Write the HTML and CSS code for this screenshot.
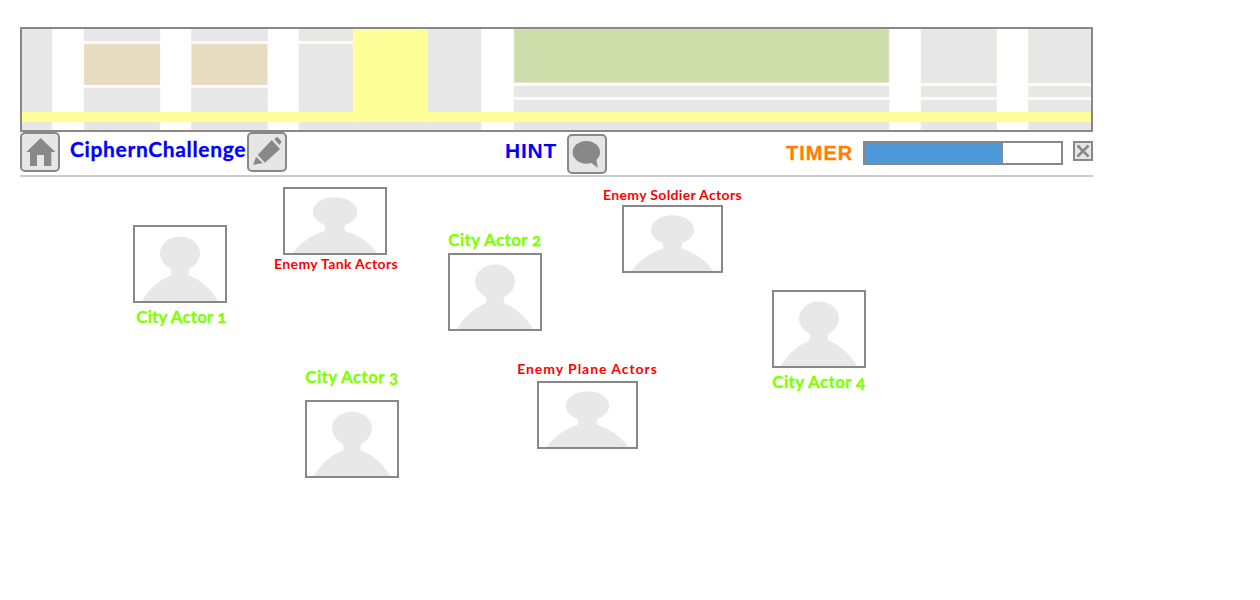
FILE: index.html
```html
<!DOCTYPE html>
<html lang="en">
<head>
<meta charset="utf-8">
<title>CiphernChallenge</title>
<link rel="stylesheet" href="styles.css">
</head>
<body>
<div class="page">
  <svg class="map" viewBox="22 29 1069 101" width="1069" height="101">
    <g class="road-gray">
      <rect x="22" y="29" width="30" height="101"/>
      <rect x="84" y="29" width="76" height="12"/>
      <rect x="84" y="88" width="76" height="42"/>
      <rect x="191.500" y="29" width="76" height="12"/>
      <rect x="191.500" y="88" width="76" height="42"/>
      <rect x="299" y="29" width="54" height="12"/>
      <rect x="299" y="44" width="54" height="86"/>
      <rect x="353" y="112" width="75" height="18"/>
      <rect x="428" y="29" width="53" height="101"/>
      <rect x="514" y="86" width="375" height="11"/>
      <rect x="514" y="100" width="375" height="30"/>
      <rect x="921" y="29" width="75.500" height="54"/>
      <rect x="921" y="86" width="75.500" height="11"/>
      <rect x="921" y="100" width="75.500" height="30"/>
      <rect x="1028.500" y="29" width="63" height="54"/>
      <rect x="1028.500" y="86" width="63" height="11"/>
      <rect x="1028.500" y="100" width="63" height="30"/>
    </g>
    <g class="road-tan">
      <rect x="84" y="44" width="76" height="41"/>
      <rect x="191.500" y="44" width="76" height="41"/>
    </g>
    <rect class="road-green" x="514" y="29" width="375" height="53.500"/>
    <rect class="road-yellow" x="353" y="29" width="75" height="83"/>
    <rect class="road-yellow" x="22" y="112" width="1069" height="10"/>
  </svg>

  <div class="toolbar">
    <button class="icon-btn" type="button" aria-label="Home">
      <svg viewBox="0 0 36 36" width="36" height="36"><path class="glyph" d="M18.700 4 L33.300 18 L29.300 18 L29.300 32 L22 32 L22 21 L15 21 L15 32 L8 32 L8 18 L4.300 18 Z"/></svg>
    </button>
    <span class="title">CiphernChallenge</span>
    <button class="icon-btn" type="button" aria-label="Edit">
      <svg viewBox="0 0 36 36" width="36" height="36"><path class="glyph" d="M4.300 31 L7 22.800 L13.800 29 Z M8.700 21 L22.700 6 L31 15 L16 28.700 Z M25.300 5 L28.300 2.700 L32.700 7.700 L30.300 11 Z"/></svg>
    </button>
    <span class="hint">HINT</span>
    <button class="icon-btn hint-btn" type="button" aria-label="Hint">
      <svg viewBox="0 0 36 36" width="36" height="36"><ellipse class="glyph" cx="17.300" cy="16.300" rx="13.700" ry="11.400"/><path class="glyph" d="M21 26 L28.700 31.700 L27.500 24 Z"/></svg>
    </button>
    <span class="timer">TIMER</span>
    <div class="bar"><div class="bar-fill"></div></div>
    <button class="close-btn" type="button" aria-label="Close">
      <svg viewBox="0 0 16 16" width="16" height="16"><path class="x" d="M2.500 2.500 L13.500 13.500 M13.500 2.500 L2.500 13.500"/></svg>
    </button>
  </div>

  <div class="actor city a1">
    <div class="box"><svg class="person" viewBox="0 0 90 74" preserveAspectRatio="none"><use href="#sil"/></svg></div>
    <span class="label city-label below shift">City Actor 1</span>
  </div>
  <div class="actor enemy a2">
    <div class="box"><svg class="person" viewBox="0 0 90 74" preserveAspectRatio="none"><use href="#sil"/></svg></div>
    <span class="label enemy-label below-tight">Enemy Tank Actors</span>
  </div>
  <div class="actor city a3">
    <span class="label city-label above">City Actor 2</span>
    <div class="box"><svg class="person" viewBox="0 0 90 74" preserveAspectRatio="none"><use href="#sil"/></svg></div>
  </div>
  <div class="actor enemy a4">
    <span class="label enemy-label above-tight">Enemy Soldier Actors</span>
    <div class="box"><svg class="person" viewBox="0 0 90 74" preserveAspectRatio="none"><use href="#sil"/></svg></div>
  </div>
  <div class="actor city a5">
    <div class="box"><svg class="person" viewBox="0 0 90 74" preserveAspectRatio="none"><use href="#sil"/></svg></div>
    <span class="label city-label below">City Actor 4</span>
  </div>
  <div class="actor city a6">
    <span class="label city-label above-far">City Actor 3</span>
    <div class="box"><svg class="person" viewBox="0 0 90 74" preserveAspectRatio="none"><use href="#sil"/></svg></div>
  </div>
  <div class="actor enemy a7">
    <span class="label enemy-label above-plane wide">Enemy Plane Actors</span>
    <div class="box"><svg class="person" viewBox="0 0 90 74" preserveAspectRatio="none"><use href="#sil"/></svg></div>
  </div>

  <svg class="defs" width="0" height="0">
    <defs>
      <g id="sil">
        <ellipse cx="45" cy="26.500" rx="20" ry="17"/>
        <path d="M7 74 C14 62 24 53 35.500 48.500 C37 47.500 36.500 44 35 40 L55 40 C53.500 44 53 47.500 54.500 48.500 C66 53 76 62 83 74 Z"/>
      </g>
    </defs>
  </svg>
</div>
</body>
</html>
```
FILE: styles.css
```css
* { box-sizing: border-box; }
html, body { margin: 0; padding: 0; background: #fff; }
body { font-family: "Lato", "Liberation Sans", sans-serif; }
.page { position: relative; width: 1260px; height: 600px; padding: 27px 0 0 20px; overflow: hidden; }

.map { display: block; width: 1073px; height: 105px; border: 2px solid #888; background: #fff; }
.road-gray rect { fill: #e7e7e7; stroke: #f5e6e2; stroke-width: 0.6; }
.road-tan rect { fill: #e7dcc0; stroke: #f3e8dc; stroke-width: 0.6; }
.road-green { fill: #ccddaa; stroke: #e6e6d0; stroke-width: 0.6; }
.road-yellow { fill: #ffff99; }

.toolbar { display: flex; align-items: flex-start; width: 1073px; height: 45px; border-bottom: 2px solid #ccc; }
.icon-btn { width: 40px; height: 40px; padding: 0; display: flex; align-items: center; justify-content: center; background: #e6e6e6; border: 2px solid #888; border-radius: 5px; }
.glyph { fill: #888; }
.title { width: 177px; margin: 5px 0 0 10px; font-size: 21px; line-height: 24px; font-weight: 700; color: #0000ff; white-space: nowrap; letter-spacing: 0.65px; -webkit-text-stroke: 0.3px #0000ff; }
.hint { width: 62px; margin: 7px 0 0 218px; font-family: "Liberation Sans", sans-serif; font-size: 21px; line-height: 24px; font-weight: 700; color: #0000ff; letter-spacing: 0.8px; }
.hint-btn { margin-top: 2px; }
.timer { width: 77px; margin: 9px 0 0 179px; font-family: "Liberation Sans", sans-serif; font-size: 20px; line-height: 24px; font-weight: 700; color: #ff8000; letter-spacing: 1px; white-space: nowrap; -webkit-text-stroke: 0.3px #ff8000; }
.bar { width: 200px; height: 24px; margin-top: 9px; border: 2px solid #888; background: #fff; }
.bar-fill { width: 138px; height: 100%; background: #4d99d9; border-right: 2px solid #888; }
.close-btn { width: 20px; height: 20px; margin: 9px 0 0 10px; padding: 0; display: flex; background: #e6e6e6; border: 2px solid #888; }
.x { stroke: #888; stroke-width: 2.500; fill: none; }

.actor { position: absolute; display: flex; flex-direction: column; align-items: center; }
.city { width: 94px; }
.enemy { width: 104px; }
.box { width: 100%; border: 2px solid #888; background: #fff; }
.city .box { height: 78px; }
.enemy .box { height: 68px; }
.person { display: block; width: 100%; height: 100%; fill: #e8e8e8; }
.label { display: block; height: 18px; line-height: 18px; font-weight: 700; white-space: nowrap; font-variant-numeric: oldstyle-nums; }
.city-label { font-size: 17px; color: #80ff00; letter-spacing: 0.35px; -webkit-text-stroke: 0.3px #80ff00; }
.enemy-label { font-size: 14px; color: #ff0000; letter-spacing: 0.35px; }
.below { margin-top: 5px; }
.below-tight { margin-top: 0; margin-left: 2px; }
.above { margin-bottom: 4px; }
.above-tight { margin-bottom: 1px; }
.above-plane { margin-bottom: 3px; }
.above-far { margin-bottom: 14px; }
.wide { letter-spacing: 0.95px; }
.shift { margin-left: 3px; letter-spacing: 0.1px; }

.a1 { left: 133px; top: 225px; }
.a2 { left: 283px; top: 187px; }
.a3 { left: 448px; top: 231px; }
.a4 { left: 622px; top: 186px; width: 101px; }
.a5 { left: 772px; top: 290px; }
.a6 { left: 305px; top: 368px; }
.a7 { left: 537px; top: 360px; width: 101px; }

.defs { position: absolute; }
```
